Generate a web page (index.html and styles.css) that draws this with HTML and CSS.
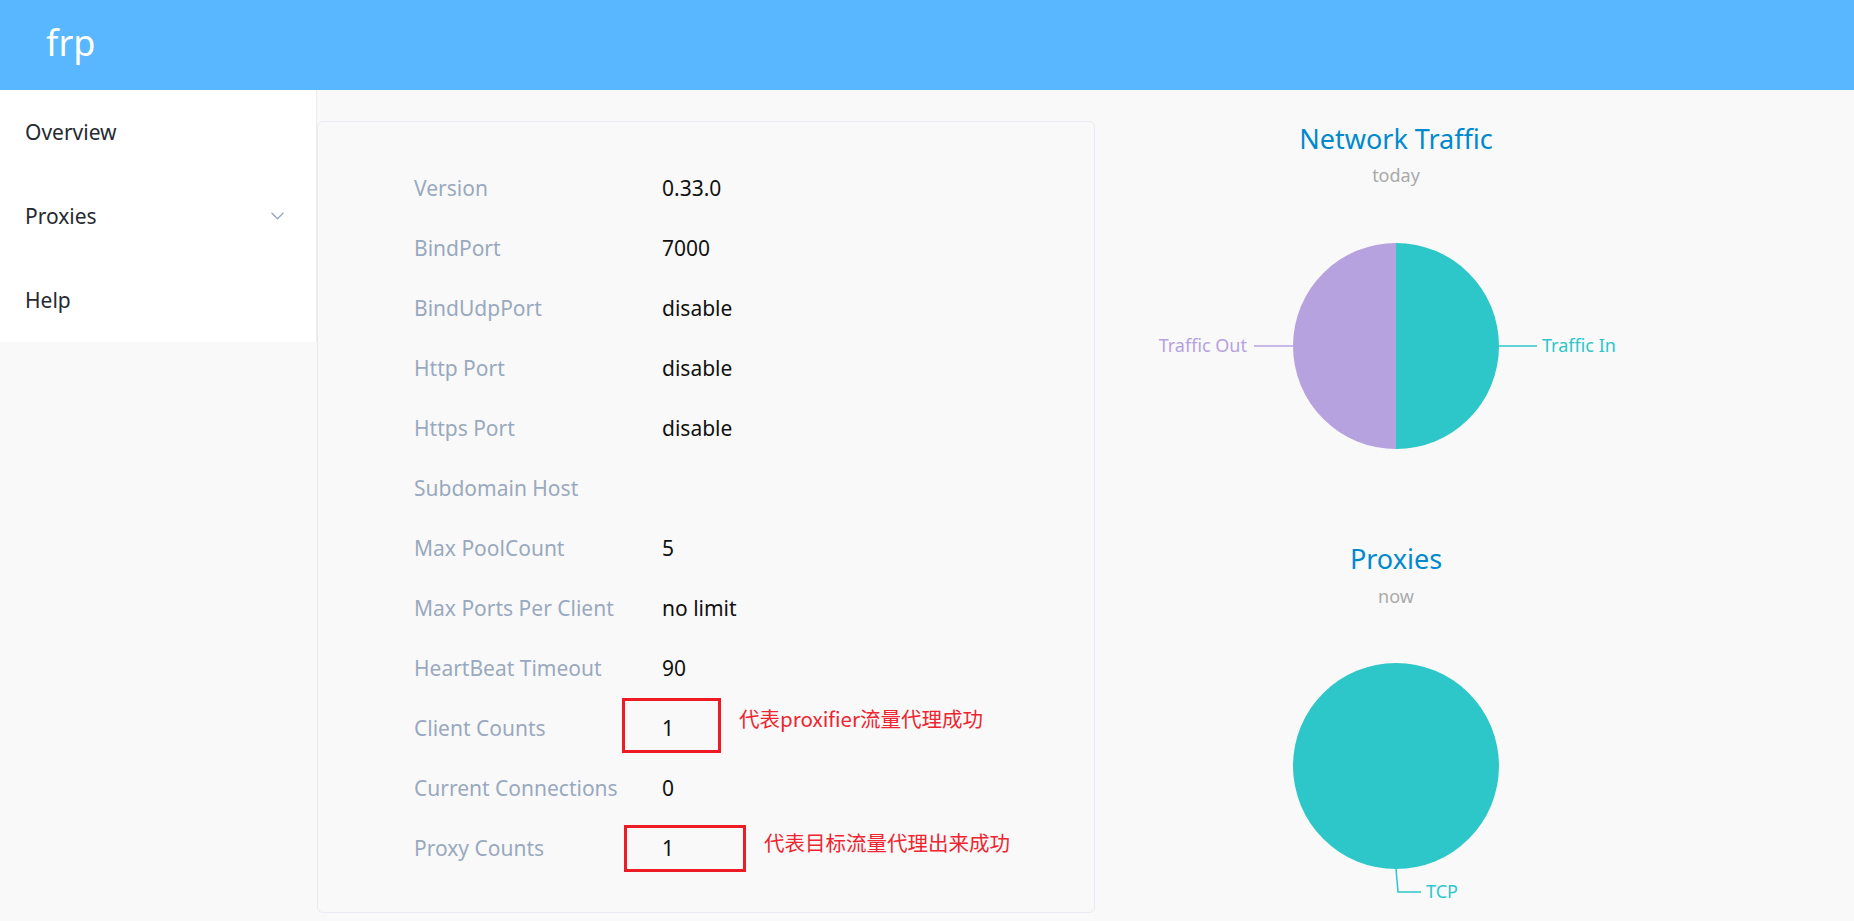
FILE: index.html
```html
<!DOCTYPE html>
<html lang="en">
<head>
<meta charset="utf-8">
<title>frp</title>
<link rel="stylesheet" href="styles.css">
</head>
<body>
<header class="topbar"><span class="brand">frp</span></header>
<div class="layout">
  <aside class="sidebar">
    <nav class="menu">
      <div class="menu-item">Overview</div>
      <div class="menu-item submenu">Proxies
        <svg class="chevron" width="13" height="8" viewBox="0 0 13 8"><polyline points="0.5,0.8 6.5,6.8 12.5,0.8" fill="none" stroke="#97a8be" stroke-width="1.3"/></svg>
      </div>
      <div class="menu-item">Help</div>
    </nav>
  </aside>
  <main class="content">
    <section class="card">
      <div class="row"><span class="label">Version</span><span class="value">0.33.0</span></div>
      <div class="row"><span class="label">BindPort</span><span class="value">7000</span></div>
      <div class="row"><span class="label">BindUdpPort</span><span class="value">disable</span></div>
      <div class="row"><span class="label">Http Port</span><span class="value">disable</span></div>
      <div class="row"><span class="label">Https Port</span><span class="value">disable</span></div>
      <div class="row"><span class="label">Subdomain Host</span><span class="value"></span></div>
      <div class="row"><span class="label">Max PoolCount</span><span class="value">5</span></div>
      <div class="row"><span class="label">Max Ports Per Client</span><span class="value">no limit</span></div>
      <div class="row"><span class="label">HeartBeat Timeout</span><span class="value">90</span></div>
      <div class="row"><span class="label">Client Counts</span><span class="value">1</span>
        <span class="mark mark-client"></span>
        <span class="note note-client">代表proxifier流量代理成功</span>
      </div>
      <div class="row"><span class="label">Current Connections</span><span class="value">0</span></div>
      <div class="row"><span class="label">Proxy Counts</span><span class="value">1</span>
        <span class="mark mark-proxy"></span>
        <span class="note note-proxy">代表目标流量代理出来成功</span>
      </div>
    </section>
    <section class="charts">
      <svg class="chart chart-traffic" width="600" height="420" viewBox="0 0 600 420">
        <text class="chart-title" x="300" y="49">Network Traffic</text>
        <text class="chart-sub" x="300" y="82">today</text>
        <path d="M300,143 A103,103 0 0 1 300,349 Z" fill="#2ec7c9"/>
        <path d="M300,143 A103,103 0 0 0 300,349 Z" fill="#b6a2de"/>
        <line x1="403" y1="246" x2="441" y2="246" stroke="#2ec7c9" stroke-width="1.5"/>
        <text class="pie-label" x="446" y="252" fill="#2ec7c9">Traffic In</text>
        <line x1="158" y1="246" x2="197" y2="246" stroke="#b6a2de" stroke-width="1.5"/>
        <text class="pie-label" x="151" y="252" fill="#b6a2de" text-anchor="end">Traffic Out</text>
      </svg>
      <svg class="chart chart-proxies" width="600" height="401" viewBox="0 0 600 401">
        <text class="chart-title" x="300" y="49">Proxies</text>
        <text class="chart-sub" x="300" y="83">now</text>
        <circle cx="300" cy="246" r="103" fill="#2ec7c9"/>
        <polyline points="300,349 302,372 325,372" fill="none" stroke="#2ec7c9" stroke-width="1.5"/>
        <text class="pie-label" x="330" y="378" fill="#2ec7c9">TCP</text>
      </svg>
    </section>
  </main>
</div>
</body>
</html>
```

FILE: styles.css
```css
html, body {
  margin: 0;
  padding: 0;
  overflow: hidden;
}
body {
  background: #f9f9f9;
  font-family: "Noto Sans", "Noto Sans CJK SC", sans-serif;
  width: 1854px;
  height: 921px;
}
.topbar {
  height: 90px;
  background: #58b7ff;
  display: flex;
  align-items: center;
  padding-left: 46px;
  padding-bottom: 4px;
  box-sizing: border-box;
}
.brand {
  color: #fff;
  font-size: 36px;
  line-height: 50px;
}
.layout {
  display: flex;
  align-items: flex-start;
}
.sidebar {
  width: 317px;
  flex: none;
}
.menu {
  background: #fff;
  border-right: 1px solid #ececec;
}
.menu-item {
  height: 84px;
  line-height: 84px;
  padding-left: 25px;
  padding-right: 32px;
  font-size: 21px;
  color: #262a31;
  display: flex;
  align-items: center;
  justify-content: space-between;
}
.chevron {
  display: block;
}
.content {
  display: flex;
  align-items: flex-start;
}
.card {
  width: 778px;
  box-sizing: border-box;
  margin-top: 31px;
  border: 1px solid #e8ebf3;
  border-radius: 6px;
  padding: 36px 0 35px 96px;
  height: 792px;
}
.row {
  position: relative;
  height: 60px;
  display: flex;
  align-items: center;
  font-size: 21px;
}
.label {
  width: 248px;
  color: #99a9bf;
  flex: none;
}
.value {
  color: #111;
}
.mark {
  position: absolute;
  border: 3px solid #ed1c24;
  box-sizing: border-box;
}
.mark-client {
  left: 208px;
  top: 0;
  width: 99px;
  height: 55px;
}
.mark-proxy {
  left: 210px;
  top: 7px;
  width: 122px;
  height: 47px;
}
.note {
  position: absolute;
  color: #ee2530;
  font-family: "Noto Sans CJK SC", "Noto Sans", sans-serif;
  font-size: 20.5px;
  line-height: 28px;
  white-space: nowrap;
}
.note-client {
  left: 325px;
  top: 6px;
}
.note-proxy {
  left: 350px;
  top: 10px;
}
.charts {
  margin-left: 1px;
  padding-top: 10px;
  display: flex;
  flex-direction: column;
}
.chart {
  display: block;
}
.chart-title {
  font-family: "Noto Sans", sans-serif;
  font-size: 27px;
  fill: #008acd;
  text-anchor: middle;
}
.chart-sub {
  font-family: "Noto Sans", sans-serif;
  font-size: 18px;
  fill: #aaaaaa;
  text-anchor: middle;
}
.pie-label {
  font-family: "Noto Sans", sans-serif;
  font-size: 18px;
}
```
